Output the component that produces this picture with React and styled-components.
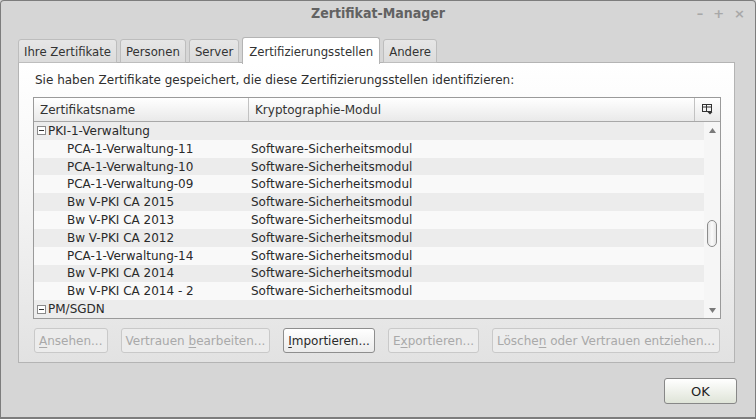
import React from 'react';
import styled, { createGlobalStyle } from 'styled-components';

const GlobalStyle = createGlobalStyle`
  html, body {
    margin: 0;
    padding: 0;
    background: #d6d6d6;
  }
  body {
    font-family: 'DejaVu Sans', 'Liberation Sans', sans-serif;
    font-size: 12px;
    color: #2e2e2e;
  }
`;

const Window = styled.div`
  width: 756px;
  height: 419px;
  box-sizing: border-box;
  border: 1px solid #7d7d7d;
  border-bottom-width: 2px;
  border-radius: 4px 4px 0 0;
  background: #d6d6d6;
  display: flex;
  flex-direction: column;
`;

const TitleBar = styled.div`
  height: 24px;
  display: grid;
  grid-template-columns: 1fr auto 1fr;
  align-items: center;
  padding: 0 10px;
`;

const Title = styled.div`
  grid-column: 2;
  font-family: 'DejaVu Sans Condensed', 'DejaVu Sans', sans-serif;
  font-stretch: condensed;
  font-weight: bold;
  font-size: 14px;
  color: #626262;
`;

const Controls = styled.div`
  grid-column: 3;
  justify-self: end;
  display: flex;
  gap: 10px;
  color: #a8a8a8;
  font-size: 13px;
  font-weight: bold;
`;

const Tabs = styled.div`
  display: flex;
  align-items: flex-end;
  gap: 3px;
  margin: 11px 0 0 17px;
  height: 27px;
  position: relative;
  z-index: 1;
`;

const Tab = styled.div`
  height: ${p => (p.$active ? 27 : 24)}px;
  box-sizing: border-box;
  padding: 0 ${p => (p.$active ? 6 : 5)}px;
  display: flex;
  align-items: center;
  font-family: 'DejaVu Sans Condensed', 'DejaVu Sans', sans-serif;
  font-stretch: condensed;
  font-size: 13px;
  color: #333;
  border: 1px solid ${p => (p.$active ? '#b4b4b4' : '#bdbdbd')};
  border-bottom: ${p => (p.$active ? 'none' : '1px solid #bdbdbd')};
  border-radius: 3px 3px 0 0;
  background: ${p => (p.$active ? '#fff' : 'linear-gradient(#e6e6e6, #dcdcdc)')};
  margin-bottom: ${p => (p.$active ? -1 : 0)}px;
`;

const Panel = styled.div`
  margin: -1px 20px 0 17px;
  height: 301px;
  box-sizing: border-box;
  border: 1px solid #b4b4b4;
  background: linear-gradient(#ffffff 0%, #f6f6f6 40%, #e2e2e2 100%);
  padding: 10px 13px 0 14px;
  display: flex;
  flex-direction: column;
`;

const Intro = styled.div`
  padding-left: 2px;
  line-height: 15px;
  color: #2e2e2e;
`;

const Tree = styled.div`
  margin-top: 9px;
  width: 688px;
  height: 222px;
  box-sizing: border-box;
  border: 1px solid #9a9a9a;
  display: flex;
  flex-direction: column;
`;

const Header = styled.div`
  display: flex;
  height: 23px;
  border-bottom: 1px solid #a8a8a8;
  background: linear-gradient(#ffffff, #e9e9e9);
`;

const HeadCell = styled.div`
  width: ${p => p.$w}px;
  flex: ${p => (p.$grow ? 1 : 'none')};
  box-sizing: border-box;
  padding-left: 6px;
  display: flex;
  align-items: center;
  border-right: 1px solid #c2c2c2;
  color: #333;
`;

const PickerCell = styled.div`
  width: 25px;
  display: flex;
  align-items: center;
  justify-content: center;
`;

const Body = styled.div`
  flex: 1;
  display: flex;
  min-height: 0;
`;

const Rows = styled.div`
  flex: 1;
  display: flex;
  flex-direction: column;
`;

const Row = styled.div`
  height: 18px;
  display: flex;
  align-items: center;
  background: ${p => (p.$odd ? '#f9f9f9' : '#ececec')};
  color: #2a2a2a;
`;

const NameCell = styled.div`
  width: 217px;
  box-sizing: border-box;
  padding-left: ${p => (p.$group ? 3 : 33)}px;
  display: flex;
  align-items: center;
  gap: 2px;
  white-space: nowrap;
`;

const ModuleCell = styled.div`
  white-space: nowrap;
`;

const Expander = styled.span`
  width: 9px;
  height: 9px;
  box-sizing: border-box;
  border: 1px solid #8a8a8a;
  background: #fff;
  display: flex;
  align-items: center;
  justify-content: center;
  &::after {
    content: '';
    width: 5px;
    height: 1px;
    background: #333;
  }
`;

const Scrollbar = styled.div`
  width: 16px;
  background: #f6f6f6;
  display: flex;
  flex-direction: column;
  align-items: center;
`;

const Arrow = styled.div`
  height: 16px;
  display: flex;
  align-items: center;
  justify-content: center;
  width: 100%;
`;

const Track = styled.div`
  flex: 1;
  width: 100%;
  display: flex;
  justify-content: center;
`;

const Thumb = styled.div`
  width: 10px;
  height: 27px;
  box-sizing: border-box;
  border: 1px solid #8c8c8c;
  border-radius: 5px;
  background: linear-gradient(90deg, #e4e4e4, #fbfbfb 50%, #e4e4e4);
`;

const Actions = styled.div`
  display: flex;
  gap: 13px;
  margin-top: 9px;
  padding-left: 1px;
`;

const Button = styled.div`
  height: 25px;
  box-sizing: border-box;
  padding: 0 4px;
  display: flex;
  align-items: center;
  border-radius: 3px;
  border: 1px solid ${p => (p.$disabled ? '#c9c9c9' : '#8e8e8e')};
  background: ${p => (p.$disabled ? '#ececec' : 'linear-gradient(#ffffff, #ebebeb)')};
  color: ${p => (p.$disabled ? '#a9a9a9' : '#2a2a2a')};
  white-space: nowrap;
  u {
    text-decoration: underline;
    text-underline-offset: 2px;
  }
`;

const Footer = styled.div`
  flex: 1;
  display: flex;
  justify-content: flex-end;
  align-items: flex-start;
  padding: 15px 18px 0 0;
`;

const OkButton = styled.div`
  width: 73px;
  height: 26px;
  box-sizing: border-box;
  border: 1px solid #878787;
  border-radius: 3px;
  background: linear-gradient(#ffffff, #dfe4d8);
  display: flex;
  align-items: center;
  justify-content: center;
  color: #222;
  font-size: 13px;
`;

const ColumnPicker = () => (
  <svg width="11" height="11" viewBox="0 0 11 11">
    <rect x="0.5" y="0.5" width="9" height="7" fill="none" stroke="#333" />
    <line x1="0.5" y1="3" x2="9.5" y2="3" stroke="#333" />
    <line x1="4.5" y1="0.5" x2="4.5" y2="7.5" stroke="#333" />
    <path d="M5.5 8 L10.5 8 L8 10.5 Z" fill="#333" />
  </svg>
);

const Triangle = ({ down }) => (
  <svg width="7" height="5" viewBox="0 0 7 5">
    <path d={down ? 'M0 0 L7 0 L3.5 5 Z' : 'M0 5 L7 5 L3.5 0 Z'} fill="#7a7a7a" />
  </svg>
);

const rows = [
  { name: 'PKI-1-Verwaltung', group: true },
  { name: 'PCA-1-Verwaltung-11' },
  { name: 'PCA-1-Verwaltung-10' },
  { name: 'PCA-1-Verwaltung-09' },
  { name: 'Bw V-PKI CA 2015' },
  { name: 'Bw V-PKI CA 2013' },
  { name: 'Bw V-PKI CA 2012' },
  { name: 'PCA-1-Verwaltung-14' },
  { name: 'Bw V-PKI CA 2014' },
  { name: 'Bw V-PKI CA 2014 - 2' },
  { name: 'PM/SGDN', group: true },
];

const tabs = ['Ihre Zertifikate', 'Personen', 'Server', 'Zertifizierungsstellen', 'Andere'];

export default function App() {
  return (
    <>
      <GlobalStyle />
      <Window>
        <TitleBar>
          <Title>Zertifikat-Manager</Title>
          <Controls>
            <span>–</span>
            <span>+</span>
            <span>×</span>
          </Controls>
        </TitleBar>

        <Tabs>
          {tabs.map(t => (
            <Tab key={t} $active={t === 'Zertifizierungsstellen'}>
              {t}
            </Tab>
          ))}
        </Tabs>

        <Panel>
          <Intro>Sie haben Zertifikate gespeichert, die diese Zertifizierungsstellen identifizieren:</Intro>

          <Tree>
            <Header>
              <HeadCell $w={215}>Zertifikatsname</HeadCell>
              <HeadCell $grow>Kryptographie-Modul</HeadCell>
              <PickerCell>
                <ColumnPicker />
              </PickerCell>
            </Header>
            <Body>
              <Rows>
                {rows.map((r, i) => (
                  <Row key={r.name} $odd={i % 2 === 1}>
                    <NameCell $group={r.group}>
                      {r.group && <Expander />}
                      {r.name}
                    </NameCell>
                    {!r.group && <ModuleCell>Software-Sicherheitsmodul</ModuleCell>}
                  </Row>
                ))}
              </Rows>
              <Scrollbar>
                <Arrow>
                  <Triangle />
                </Arrow>
                <Track>
                  <Thumb style={{ marginTop: 82 }} />
                </Track>
                <Arrow>
                  <Triangle down />
                </Arrow>
              </Scrollbar>
            </Body>
          </Tree>

          <Actions>
            <Button $disabled>
              <span><u>A</u>nsehen...</span>
            </Button>
            <Button $disabled>
              <span>Vertrauen <u>b</u>earbeiten...</span>
            </Button>
            <Button>
              <span><u>I</u>mportieren...</span>
            </Button>
            <Button $disabled>
              <span>E<u>x</u>portieren...</span>
            </Button>
            <Button $disabled>
              <span>Lösche<u>n</u> oder Vertrauen entziehen...</span>
            </Button>
          </Actions>
        </Panel>

        <Footer>
          <OkButton>OK</OkButton>
        </Footer>
      </Window>
    </>
  );
}
